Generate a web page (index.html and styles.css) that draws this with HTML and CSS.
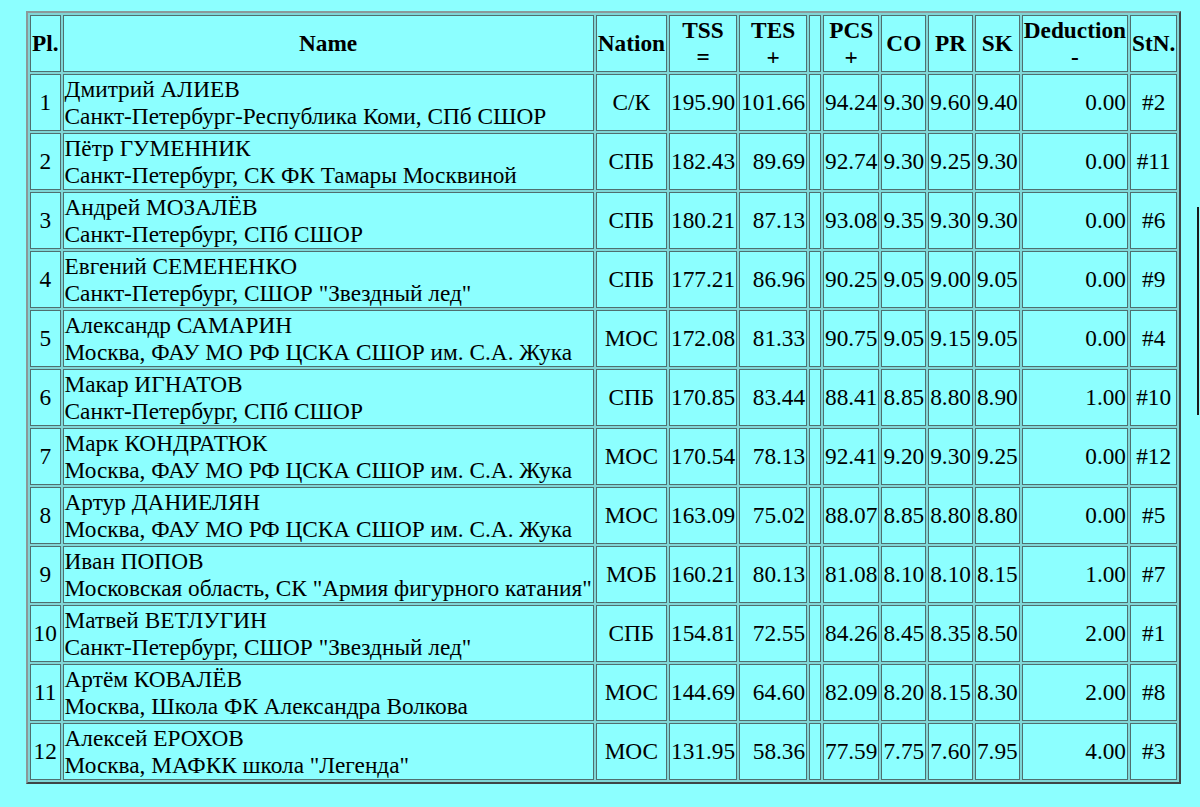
FILE: index.html
```html
<!DOCTYPE html>
<html>
<head>
<meta charset="utf-8">
<link rel="stylesheet" href="styles.css">
</head>
<body>
<table class="results">
<tr class="head">
<th>Pl.</th><th>Name</th><th>Nation</th><th>TSS<br>=</th><th>TES<br>+</th><th class="gap">&nbsp;</th><th>PCS<br>+</th><th>CO</th><th>PR</th><th>SK</th><th>Deduction<br>-</th><th>StN.</th>
</tr>
<tr><td class="c">1</td><td class="l">Дмитрий АЛИЕВ<br>Санкт-Петербург-Республика Коми, СПб СШОР</td><td class="c">С/К</td><td class="r">195.90</td><td class="r">101.66</td><td class="gap">&nbsp;</td><td class="r">94.24</td><td class="r">9.30</td><td class="r">9.60</td><td class="r">9.40</td><td class="r">0.00</td><td class="c">#2</td></tr>
<tr><td class="c">2</td><td class="l">Пётр ГУМЕННИК<br>Санкт-Петербург, СК ФК Тамары Москвиной</td><td class="c">СПБ</td><td class="r">182.43</td><td class="r">89.69</td><td class="gap">&nbsp;</td><td class="r">92.74</td><td class="r">9.30</td><td class="r">9.25</td><td class="r">9.30</td><td class="r">0.00</td><td class="c">#11</td></tr>
<tr><td class="c">3</td><td class="l">Андрей МОЗАЛЁВ<br>Санкт-Петербург, СПб СШОР</td><td class="c">СПБ</td><td class="r">180.21</td><td class="r">87.13</td><td class="gap">&nbsp;</td><td class="r">93.08</td><td class="r">9.35</td><td class="r">9.30</td><td class="r">9.30</td><td class="r">0.00</td><td class="c">#6</td></tr>
<tr><td class="c">4</td><td class="l">Евгений СЕМЕНЕНКО<br>Санкт-Петербург, СШОР "Звездный лед"</td><td class="c">СПБ</td><td class="r">177.21</td><td class="r">86.96</td><td class="gap">&nbsp;</td><td class="r">90.25</td><td class="r">9.05</td><td class="r">9.00</td><td class="r">9.05</td><td class="r">0.00</td><td class="c">#9</td></tr>
<tr><td class="c">5</td><td class="l">Александр САМАРИН<br>Москва, ФАУ МО РФ ЦСКА СШОР им. С.А. Жука</td><td class="c">МОС</td><td class="r">172.08</td><td class="r">81.33</td><td class="gap">&nbsp;</td><td class="r">90.75</td><td class="r">9.05</td><td class="r">9.15</td><td class="r">9.05</td><td class="r">0.00</td><td class="c">#4</td></tr>
<tr><td class="c">6</td><td class="l">Макар ИГНАТОВ<br>Санкт-Петербург, СПб СШОР</td><td class="c">СПБ</td><td class="r">170.85</td><td class="r">83.44</td><td class="gap">&nbsp;</td><td class="r">88.41</td><td class="r">8.85</td><td class="r">8.80</td><td class="r">8.90</td><td class="r">1.00</td><td class="c">#10</td></tr>
<tr><td class="c">7</td><td class="l">Марк КОНДРАТЮК<br>Москва, ФАУ МО РФ ЦСКА СШОР им. С.А. Жука</td><td class="c">МОС</td><td class="r">170.54</td><td class="r">78.13</td><td class="gap">&nbsp;</td><td class="r">92.41</td><td class="r">9.20</td><td class="r">9.30</td><td class="r">9.25</td><td class="r">0.00</td><td class="c">#12</td></tr>
<tr><td class="c">8</td><td class="l">Артур ДАНИЕЛЯН<br>Москва, ФАУ МО РФ ЦСКА СШОР им. С.А. Жука</td><td class="c">МОС</td><td class="r">163.09</td><td class="r">75.02</td><td class="gap">&nbsp;</td><td class="r">88.07</td><td class="r">8.85</td><td class="r">8.80</td><td class="r">8.80</td><td class="r">0.00</td><td class="c">#5</td></tr>
<tr><td class="c">9</td><td class="l">Иван ПОПОВ<br>Московская область, СК "Армия фигурного катания"</td><td class="c">МОБ</td><td class="r">160.21</td><td class="r">80.13</td><td class="gap">&nbsp;</td><td class="r">81.08</td><td class="r">8.10</td><td class="r">8.10</td><td class="r">8.15</td><td class="r">1.00</td><td class="c">#7</td></tr>
<tr><td class="c">10</td><td class="l">Матвей ВЕТЛУГИН<br>Санкт-Петербург, СШОР "Звездный лед"</td><td class="c">СПБ</td><td class="r">154.81</td><td class="r">72.55</td><td class="gap">&nbsp;</td><td class="r">84.26</td><td class="r">8.45</td><td class="r">8.35</td><td class="r">8.50</td><td class="r">2.00</td><td class="c">#1</td></tr>
<tr><td class="c">11</td><td class="l">Артём КОВАЛЁВ<br>Москва, Школа ФК Александра Волкова</td><td class="c">МОС</td><td class="r">144.69</td><td class="r">64.60</td><td class="gap">&nbsp;</td><td class="r">82.09</td><td class="r">8.20</td><td class="r">8.15</td><td class="r">8.30</td><td class="r">2.00</td><td class="c">#8</td></tr>
<tr><td class="c">12</td><td class="l">Алексей ЕРОХОВ<br>Москва, МАФКК школа "Легенда"</td><td class="c">МОС</td><td class="r">131.95</td><td class="r">58.36</td><td class="gap">&nbsp;</td><td class="r">77.59</td><td class="r">7.75</td><td class="r">7.60</td><td class="r">7.95</td><td class="r">4.00</td><td class="c">#3</td></tr>
</table>
<div class="edge"></div>
</body>
</html>
```
FILE: styles.css
```css
html, body {
  margin: 0;
  padding: 0;
  background: #8cffff;
}
body {
  font-family: "Liberation Serif", "Times New Roman", serif;
  font-size: 23.3px;
  color: #000;
  height: 807px;
  overflow: hidden;
  position: relative;
}
.results {
  margin: 11px 0 0 26px;
  border-collapse: separate;
  border-spacing: 2px;
  border: 2px outset #8a9a9a;
  background: #7fd6d6;
}
.results th,
.results td {
  background: #8cffff;
  border: 1px solid #4f6f6f;
  padding: 1px;
  line-height: 26.5px;
  white-space: nowrap;
}
.results th {
  font-weight: bold;
  text-align: center;
  vertical-align: middle;
}
.results td.c { text-align: center; }
.results td.l { text-align: left; }
.results td.r { text-align: right; }
.results .gap { padding: 1px 2px; }
.edge {
  position: absolute;
  left: 1197px;
  top: 207px;
  width: 2px;
  height: 208px;
  background: #1a1a1a;
}
```
